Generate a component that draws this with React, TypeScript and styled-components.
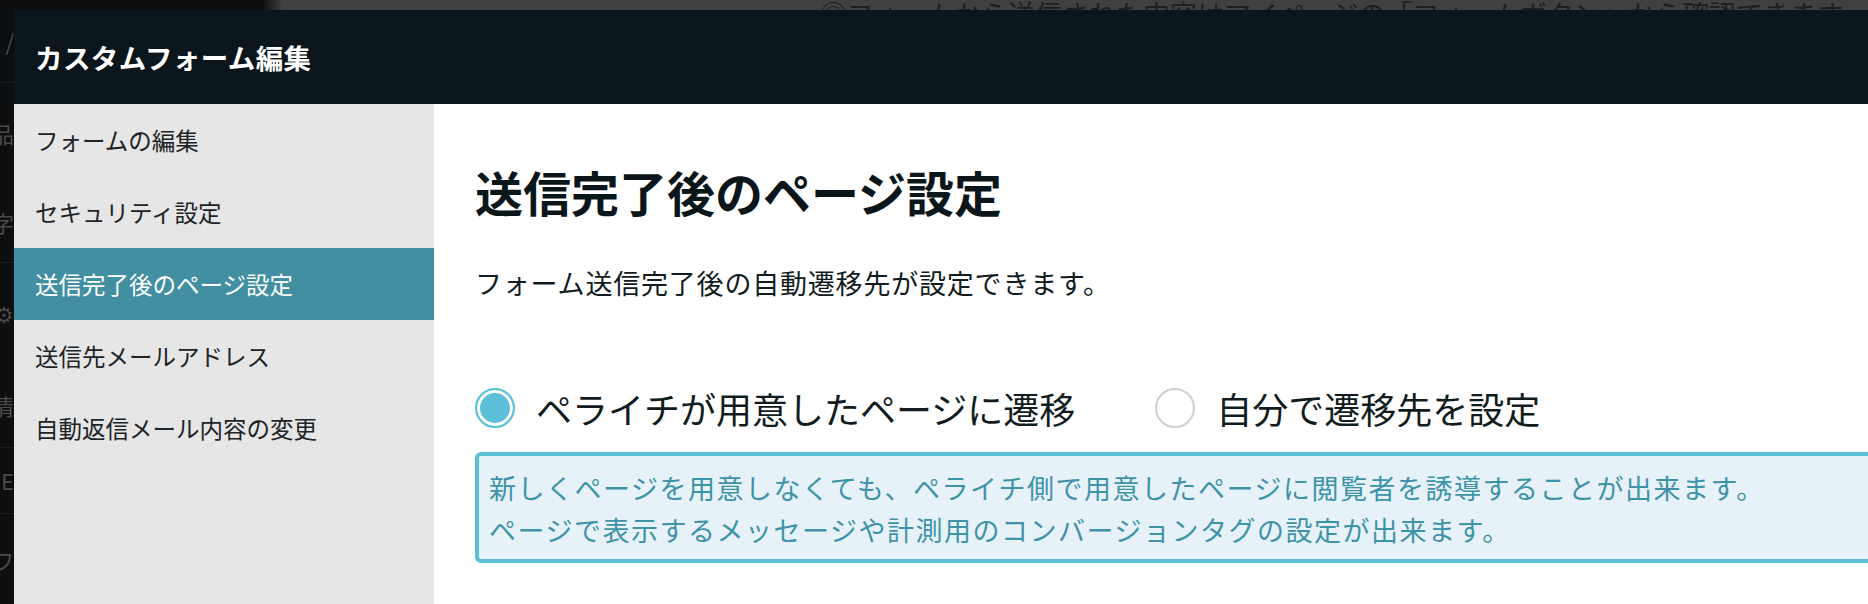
import { createGlobalStyle, styled } from "styled-components";

const GlobalStyle = createGlobalStyle`
	html, body {
		margin: 0;
		padding: 0;
		background: #0d0e10;
		overflow: hidden;
	}
	body {
		font-family: "Noto Sans CJK JP", "Noto Sans", sans-serif;
	}
`;

const Backdrop = styled.div`
	display: flex;
	height: 100vh;
	width: 100vw;
`;

const BackRail = styled.div`
	width: 286px;
	display: flex;
	flex-direction: column;
	background: #0d0e10;
`;

const BackRailItem = styled.div<{ $h: number; $line?: boolean }>`
	height: ${(p) => p.$h}px;
	width: 14px;
	display: flex;
	align-items: center;
	justify-content: flex-end;
	overflow: hidden;
	white-space: nowrap;
	color: #4a4a4a;
	font-size: 22px;
	border-bottom: ${(p) => (p.$line ? "1px solid #1c1d20" : "none")};
`;

const BackMain = styled.div`
	flex: 1;
	padding-left: 556px;
	background: linear-gradient(90deg, #111 0px, #3a3a3a 16px, #404040 18px);
`;

const BackNotice = styled.div`
	font-size: 27px;
	line-height: 28px;
	white-space: nowrap;
	color: #1e1e1e;
`;

const Modal = styled.div`
	position: fixed;
	top: 10px;
	left: 14px;
	width: 2000px;
	height: 640px;
	display: flex;
	flex-direction: column;
	background: #fff;
`;

const Header = styled.header`
	height: 94px;
	flex-shrink: 0;
	display: flex;
	align-items: center;
	padding-left: 21px;
	background: #0a161b;
	color: #fff;
	font-size: 27.5px;
	letter-spacing: 0.4px;
	font-weight: 700;
`;

const Body = styled.div`
	flex: 1;
	display: flex;
`;

const Side = styled.nav`
	width: 420px;
	flex-shrink: 0;
	display: flex;
	flex-direction: column;
	background: #e6e6e6;
`;

const SideItem = styled.div<{ $active?: boolean }>`
	height: 72px;
	display: flex;
	align-items: center;
	padding-left: 21px;
	font-size: 23.5px;
	color: ${(p) => (p.$active ? "#fff" : "#1d2326")};
	background: ${(p) => (p.$active ? "#418fa0" : "transparent")};
`;

const Content = styled.main`
	flex: 1;
	display: flex;
	flex-direction: column;
	align-items: flex-start;
	padding: 54px 0 0 41px;
	color: #0b161b;
`;

const Title = styled.h1`
	margin: 0;
	font-size: 48px;
	line-height: 67px;
	font-weight: 700;
`;

const Lead = styled.p`
	margin: 38px 0 0;
	font-size: 27px;
	line-height: 40px;
	letter-spacing: 0.8px;
	color: #111c20;
`;

const Options = styled.div`
	margin-top: 85px;
	display: flex;
	gap: 80px;
`;

const Option = styled.label`
	display: flex;
	align-items: center;
	gap: 21px;
	font-size: 36px;
	line-height: 40px;
	color: #111c20;
`;

const Radio = styled.span<{ $checked?: boolean }>`
	width: 40px;
	height: 40px;
	box-sizing: border-box;
	border-radius: 50%;
	border: 2px solid ${(p) => (p.$checked ? "#5bc0d8" : "#cfcfcf")};
	background: ${(p) => (p.$checked ? "#5bc0d8" : "#fff")};
	box-shadow: ${(p) => (p.$checked ? "inset 0 0 0 3px #fff" : "none")};
`;

const Note = styled.div`
	margin-top: 24px;
	width: 1500px;
	box-sizing: border-box;
	padding: 11px 10px 8px;
	border: 4px solid #5bbfd6;
	border-radius: 6px;
	background: #e6f2f7;
	color: #3f93a8;
	font-size: 27px;
	line-height: 42px;
	letter-spacing: 1.5px;
`;

const sideItems = [
	"フォームの編集",
	"セキュリティ設定",
	"送信完了後のページ設定",
	"送信先メールアドレス",
	"自動返信メール内容の変更",
];

const railItems: { h: number; text: string; line?: boolean }[] = [
	{ h: 82, text: "/", line: true },
	{ h: 100, text: "品" },
	{ h: 80, text: "文字", line: true },
	{ h: 100, text: "⚙" },
	{ h: 84, text: "基本情", line: true },
	{ h: 66, text: "テーマE", line: true },
	{ h: 90, text: "ワ" },
];

export default function App() {
	return (
		<>
			<GlobalStyle />
			<Backdrop>
				<BackRail>
					{railItems.map((r, i) => (
						<BackRailItem key={i} $h={r.h} $line={r.line}>
							{r.text}
						</BackRailItem>
					))}
				</BackRail>
				<BackMain>
					<BackNotice>◎フォームから送信された内容はマイページの「フォームボタン」から確認できます。</BackNotice>
				</BackMain>
			</Backdrop>
			<Modal>
				<Header>カスタムフォーム編集</Header>
				<Body>
					<Side>
						{sideItems.map((label, i) => (
							<SideItem key={label} $active={i === 2}>
								{label}
							</SideItem>
						))}
					</Side>
					<Content>
						<Title>送信完了後のページ設定</Title>
						<Lead>フォーム送信完了後の自動遷移先が設定できます。</Lead>
						<Options>
							<Option>
								<Radio $checked />
								ペライチが用意したページに遷移
							</Option>
							<Option>
								<Radio />
								自分で遷移先を設定
							</Option>
						</Options>
						<Note>
							新しくページを用意しなくても、ペライチ側で用意したページに閲覧者を誘導することが出来ます。
							<br />
							ページで表示するメッセージや計測用のコンバージョンタグの設定が出来ます。
						</Note>
					</Content>
				</Body>
			</Modal>
		</>
	);
}
